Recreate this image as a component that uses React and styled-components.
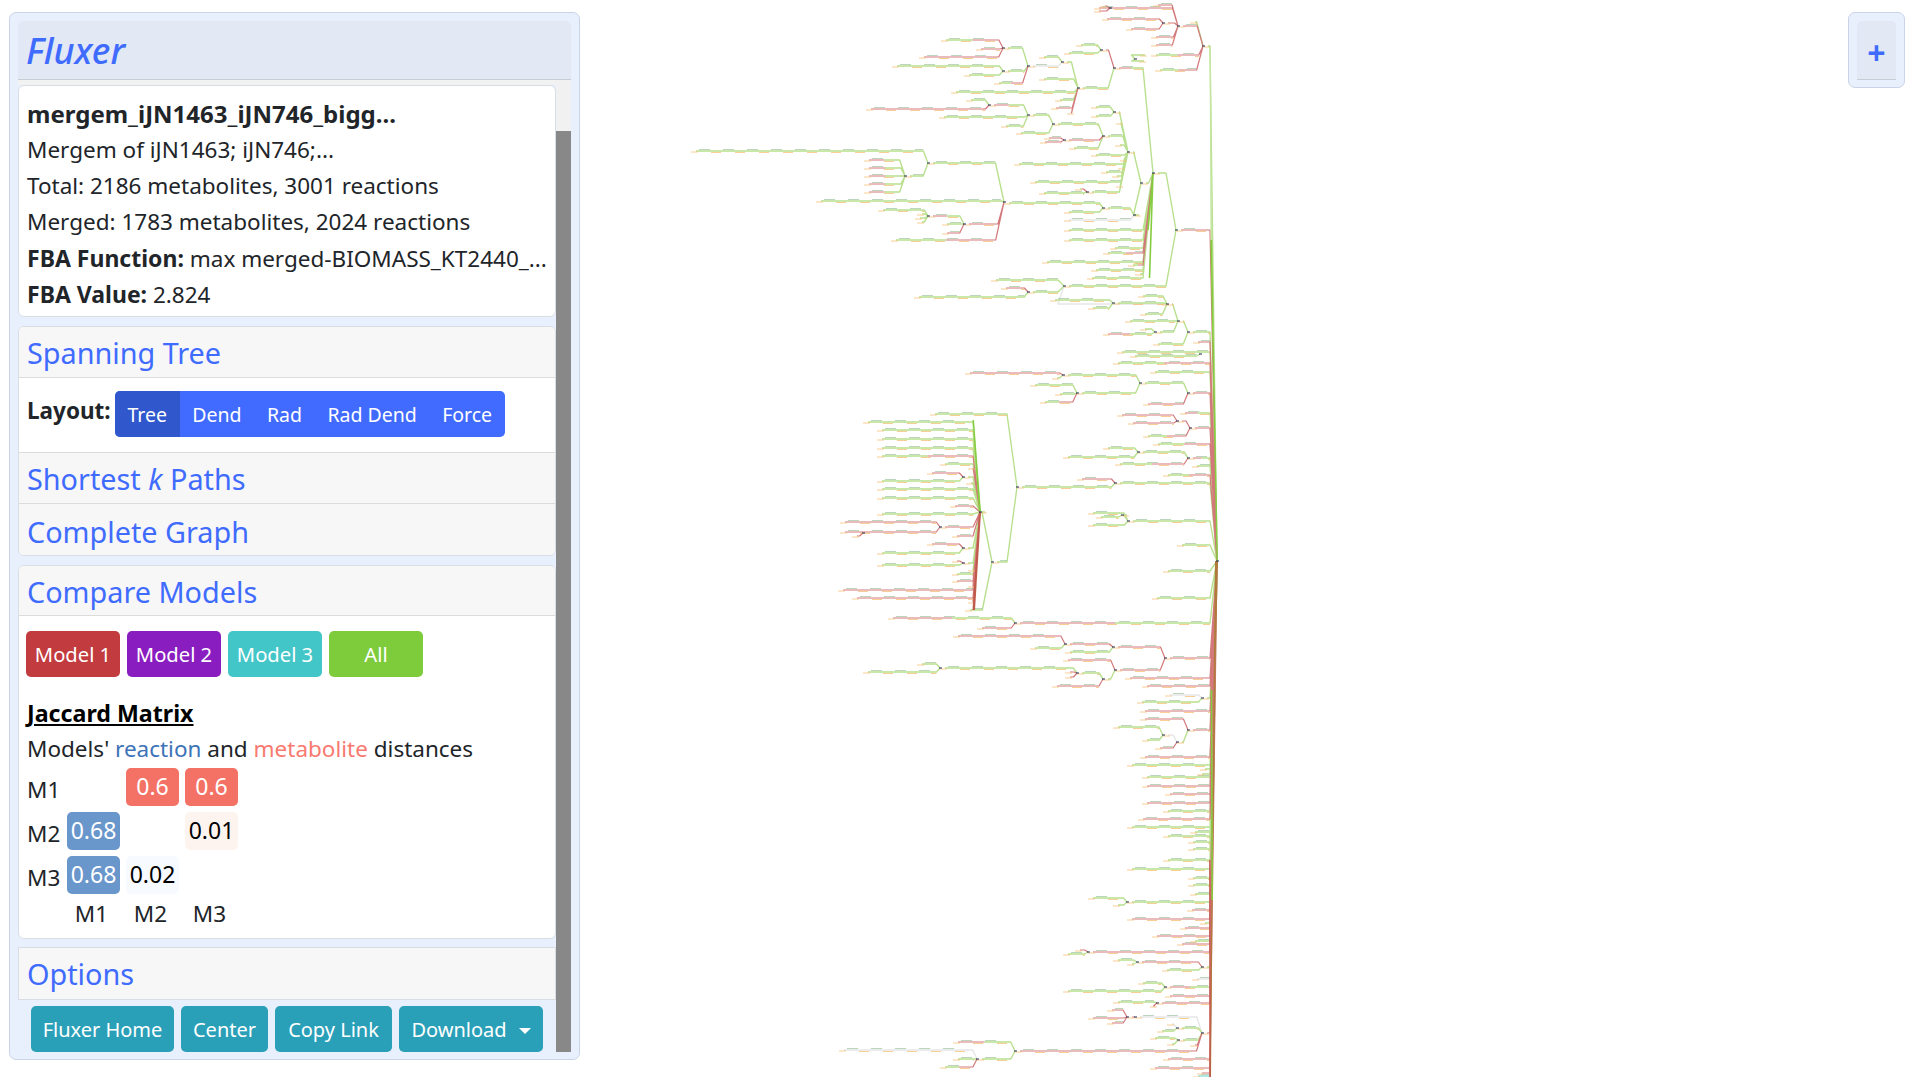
import React, { useLayoutEffect, useRef } from "react";
import styled, { createGlobalStyle } from "styled-components";

const GlobalStyle = createGlobalStyle`
  html, body { margin: 0; padding: 0; background: #fff; overflow: hidden; }
  body { font-family: "Noto Sans", "Open Sans", sans-serif; font-size: 22.5px; color: #212529; }
  b { font-size: 23px; }
`;

// [parentX, parentY, [[x, y, colour]...], elbowX]   g green, r red, w grey, t teal, m red then green, n green then red
const TREE = [
  [1217, 561, [
    [1203, 46], [1176, 230, "r"], [1188, 332], [1193, 342, "r"], [1117, 352], [1113, 363, "n"], [1150, 372],
    [1188, 393, "r"], [1180, 413, "m"], [1190, 428, "r"], [1153, 444, "n"], [1188, 458, "m"], [1192, 466], [1163, 475, "n"],
    [1115, 483], [1128, 521], [1177, 545], [1163, 571], [1152, 598], [1015, 623, "m"], [1165, 658, "r"], [1125, 678, "r"],
    [1142, 686, "r"], [1202, 698], [1140, 711, "r"], [1188, 730, "r"], [1140, 757, "r"], [1127, 765], [1200, 769], [1197, 774],
    [1142, 777], [1142, 786, "r"], [1165, 794, "r"], [1142, 803, "r"], [1163, 811], [1138, 819, "r"], [1127, 827], [1190, 832],
    [1163, 836], [1188, 842], [1188, 849], [1163, 860], [1127, 869], [1188, 878], [1188, 885], [1190, 894], [1127, 902],
    [1187, 910, "r"], [1127, 919, "r"], [1200, 923], [1180, 928, "r"], [1152, 936, "r"], [1190, 941], [1177, 944, "r"],
    [1088, 952, "r"], [1202, 967], [1192, 979, "w"], [1165, 987, "m"], [1165, 996, "r"], [1157, 1003, "r"], [1202, 1033, "r"],
    [1163, 1059, "r"], [1150, 1068, "r"], [1197, 1073, "r"], [1193, 1076, "t"],
  ], 1210],
  [1203, 46, [[1178, 26, "r"], [1151, 55, "n"], [1155, 70, "n"], [1190, 22]]],
  [1178, 26, [[1094, 8, "r"], [1153, 5, "r"], [1163, 23, "r"], [1151, 37, "r"], [1151, 45, "r"]]],
  [1163, 23, [[1102, 19, "r"], [1126, 29, "r"]]],
  [1110, 8, [[1100, 6, "r"], [1094, 11, "r"]]],
  [1135, 59, [[1140, 55], [1139, 61]]],
  [1176, 230, [[1153, 173], [1064, 286]]],
  [1153, 173, [
    [1114, 68, "m"], [1064, 230], [1064, 240], [1103, 253, "n"], [1042, 262], [1091, 270], [1087, 278], [1141, 183],
    [1110, 248], [1135, 274], [1128, 265, "n"],
  ]],
  [1141, 183, [[1128, 152], [1134, 215]]],
  [1128, 152, [
    [1114, 112], [1116, 123], [1103, 136], [1091, 155], [1120, 160], [1014, 164], [1101, 172], [1030, 182], [1087, 192],
    [1115, 145], [1118, 168], [1112, 176], [1116, 186],
  ]],
  [1114, 112, [[1091, 107], [1091, 116]]],
  [1103, 136, [[1053, 124], [1064, 140, "r"], [1069, 148]]],
  [1064, 140, [[1044, 138, "r"], [1040, 142, "r"]]],
  [1053, 124, [[1028, 115], [1016, 133]]],
  [1028, 115, [[989, 105, "m"], [939, 117], [1001, 126]]],
  [989, 105, [[966, 100], [866, 109, "r"]]],
  [1087, 192, [[1039, 193], [1075, 189, "n"]]],
  [1134, 215, [[1103, 208], [1064, 220, "w"]]],
  [1103, 208, [[1004, 203], [1064, 212]]],
  [1004, 202, [[928, 163], [816, 201], [964, 224, "r"], [891, 240, "n"]]],
  [928, 163, [[691, 151], [905, 176]]],
  [905, 176, [[864, 160, "m"], [864, 168, "m"], [864, 176, "m"], [864, 184, "m"], [864, 192, "m"]]],
  [964, 224, [[928, 216, "m"], [942, 224], [942, 233, "r"]]],
  [928, 216, [[878, 210], [917, 214], [915, 218], [917, 222]]],
  [1114, 68, [[1101, 50, "r"], [1078, 88]]],
  [1101, 50, [[1076, 45], [1064, 53]]],
  [1078, 88, [[1062, 62], [1039, 79], [951, 92], [1055, 100], [1051, 108, "r"], [1067, 113, "r"]]],
  [1062, 62, [[1039, 57], [1028, 66, "w"]]],
  [1028, 66, [[1003, 48], [1003, 71], [994, 83, "n"]]],
  [1003, 48, [[941, 40, "n"], [976, 49, "r"], [919, 57, "r"]]],
  [1003, 71, [[892, 66], [964, 75]]],
  [1064, 286, [[991, 280], [1028, 292], [1162, 304, "w"]], 1058],
  [1028, 292, [[1001, 288, "r"], [914, 297]]],
  [1188, 332, [[1178, 321], [1153, 344]]],
  [1178, 321, [[1167, 304], [1125, 321], [1155, 332]]],
  [1167, 304, [[1138, 296], [1113, 303], [1140, 314]]],
  [1113, 303, [[1050, 300], [1088, 308]]],
  [1155, 332, [[1140, 329], [1103, 334, "m"]]],
  [1200, 354, [[1130, 356]]],
  [1188, 393, [[1140, 383], [1143, 404, "r"]]],
  [1140, 383, [[1063, 375], [1077, 393]]],
  [1063, 375, [[965, 373, "r"], [1052, 378]]],
  [1077, 393, [[1030, 385], [1055, 394], [1040, 402, "n"]]],
  [1190, 428, [[1177, 421, "r"], [1143, 436, "n"]]],
  [1177, 421, [[1117, 415, "r"], [1128, 423, "r"]]],
  [1188, 458, [[1138, 452], [1115, 464, "n"]]],
  [1138, 452, [[1103, 448], [1063, 457]]],
  [1115, 483, [[1077, 479, "r"], [1017, 487]]],
  [1017, 487, [[930, 414], [992, 562]]],
  [992, 562, [[980, 512], [965, 610]]],
  [980, 512, [
    [863, 422], [877, 430], [877, 439], [877, 448], [877, 456, "n"], [940, 464], [968, 468, "r"], [963, 477], [966, 483],
    [877, 489], [877, 498], [950, 506, "r"], [877, 514], [940, 527, "r"], [952, 536, "r"], [963, 548], [963, 563],
    [952, 574], [952, 581, "r"], [838, 590, "r"], [852, 598, "r"], [968, 570], [968, 586, "r"], [968, 602, "r"],
  ], 973],
  [963, 477, [[927, 473, "r"], [877, 481]]],
  [963, 548, [[927, 544, "r"], [877, 553]]],
  [963, 563, [[952, 561, "r"], [877, 565]]],
  [940, 527, [[840, 522, "r"], [840, 532, "r"]]],
  [863, 533, [[852, 536, "r"]]],
  [1128, 521, [[1122, 515], [1088, 513], [1088, 525]]],
  [1122, 515, [[1096, 517]]],
  [1015, 623, [[888, 618, "m"], [977, 628, "r"]]],
  [1165, 658, [[1113, 647, "r"], [1115, 670, "r"]]],
  [1113, 647, [[1065, 644, "r"], [1065, 652]]],
  [1065, 644, [[953, 636, "r"], [1030, 648]]],
  [1115, 670, [[1063, 660, "r"], [1103, 679]]],
  [1103, 679, [[1077, 673], [1052, 686, "r"]]],
  [1077, 673, [[940, 668], [1065, 672, "r"], [1065, 677, "r"]]],
  [940, 668, [[917, 664], [863, 672]]],
  [1202, 698, [[1165, 695, "w"], [1137, 702]]],
  [1188, 730, [[1140, 719, "r"], [1177, 742]]],
  [1177, 742, [[1163, 735, "w"], [1155, 748, "r"]]],
  [1163, 735, [[1113, 727], [1142, 740]]],
  [1127, 902, [[1088, 898], [1113, 905]]],
  [1088, 952, [[1075, 950, "r"], [1063, 954]]],
  [1202, 967, [[1137, 962, "r"], [1162, 970]]],
  [1137, 962, [[1113, 960], [1127, 964]]],
  [1165, 987, [[1138, 983], [1063, 991]]],
  [1157, 1003, [[1113, 1002], [1150, 1006, "r"]]],
  [1202, 1033, [[1135, 1017, "w"], [1177, 1028], [1178, 1040], [1015, 1051, "r"], [1190, 1045, "r"]]],
  [1135, 1017, [[1127, 1017, "r"]]],
  [1127, 1017, [[1107, 1010, "r"], [1088, 1018, "r"], [1107, 1023, "r"]]],
  [1177, 1028, [[1167, 1024, "w"], [1157, 1031]]],
  [1178, 1040, [[1150, 1038], [1167, 1044]]],
  [1015, 1051, [[953, 1042, "m"], [977, 1059]]],
  [977, 1059, [[839, 1050, "w"], [953, 1059], [940, 1067, "n"]]],
];

const STROKES = { t: "#8fdcd8", w: "#e6e6e6", g: "#b9e08f", r: "#d4797b" };

function buildTree() {
  const lines = { t: "", w: "", g: "", r: "" };
  let tags = "";
  let tips = "";
  let nodes = "";
  TREE.forEach(([px, py, kids, fixed]) => {
    nodes += `M${px - 1} ${py}h3`;
    kids.forEach(([x0, y, c = "g"]) => {
      const x = x0 + 5;
      const bend = fixed ?? px - Math.min(Math.abs(y - py) * 0.14 + 3, 10);
      const mid = (x + bend) / 2;
      if (c === "t") {
        lines.t += `M${x} ${y}L${bend} ${y}`;
      } else if (c === "m" || c === "n") {
        lines[c === "m" ? "r" : "g"] += `M${x} ${y}L${mid} ${y}`;
        lines[c === "m" ? "g" : "r"] += `M${mid} ${y}L${bend} ${y}L${px} ${py}`;
      } else {
        lines[c] += `M${x} ${y}L${bend} ${y}L${px} ${py}`;
      }
      for (let at = x + 3; at < bend - 6; at += 24) {
        tags += `M${at} ${y - 1.5}h${Math.min(11, bend - at)}`;
        if (at + 12 < bend) tips += `M${at + 12} ${y + 1.5}h${Math.min(10, bend - at - 12)}`;
      }
      tips += `M${x0} ${y + 1}h7`;
    });
  });
  return { lines, tags, tips, nodes };
}

const { lines, tags, tips, nodes } = buildTree();

const FluxTree = () => (
  <Canvas viewBox="0 0 1909 1077">
    <g fill="none" strokeLinejoin="round">
      {Object.keys(lines).map((c) => (
        <path key={c} d={lines[c]} stroke={STROKES[c]} strokeWidth={c === "r" ? 1.2 : 1.4} />
      ))}
      <path d={tags} stroke="#8fb98f" strokeWidth="1" opacity="0.6" />
      <path d={tips} stroke="#f6bd72" strokeWidth="1" opacity="0.75" />
    </g>
    <polygon points="1209.5,46 1210.8,46 1212.2,240 1210.5,240" fill="#c4e6a2" />
    <polygon points="1210.3,240 1212.2,240 1214.5,380 1218,561 1216.5,561" fill="#86cc40" />
    <polygon points="1215,561 1218,561 1215.8,650 1214.5,760 1212.5,900 1211,1077 1209.5,1077" fill="#af7a3b" />
    <path d="M1211.5 690L1212.2 900" stroke="#86cc40" strokeWidth="1.6" />
    <path d="M1209.8 860L1210 1077" stroke="#c4504f" strokeWidth="1.2" />
    <polygon points="972.5,420 974,420 981,512 979,512" fill="#86cc40" />
    <polygon points="979,512 981,512 975,610 972.5,610" fill="#c05a4a" />
    <path d="M1148 230L1153 173L1149.5 278" fill="none" stroke="#86cc40" strokeWidth="1.6" />
    <path d={nodes} stroke="#1d2a55" strokeWidth="1.2" fill="none" />
  </Canvas>
);

const Page = styled.div`
  position: relative;
  width: 1909px;
  height: 1077px;
  overflow: hidden;
`;

const Canvas = styled.svg`
  display: block;
  width: 1909px;
  height: 1077px;
`;

const Panel = styled.aside`
  position: absolute;
  left: 9px;
  top: 12px;
  width: 571px;
  height: 1048px;
  box-sizing: border-box;
  padding: 8px 8px 7px;
  background: #e9f0fd;
  border: 1px solid #c9d4e8;
  border-radius: 7px;
  display: flex;
  flex-direction: column;
`;

const TitleBar = styled.header`
  flex: none;
  height: 59px;
  box-sizing: border-box;
  padding: 0 8px;
  background: #e2e8f4;
  border-bottom: 1px solid #c8ccd3;
  border-radius: 5px 5px 0 0;
  display: flex;
  align-items: center;
`;

const Title = styled.h1`
  margin: 0;
  font-size: 36px;
  font-weight: 500;
  font-style: italic;
  color: #3f6bff;
`;

const ScrollArea = styled.div`
  flex: 1;
  min-height: 0;
  display: flex;
`;

const Scroller = styled.div`
  flex: 1;
  min-width: 0;
  overflow: hidden;
`;

const ScrollRail = styled.div`
  flex: none;
  width: 15px;
  box-sizing: border-box;
  padding-top: 51px;
  background: #f1f1f1;
  display: flex;
`;

const ScrollThumb = styled.div`
  flex: 1;
  background: #888;
`;

const TopStrip = styled.div`
  height: 59px;
  background: #f2f2f2;
`;

const Card = styled.section`
  background: #fff;
  border: 1px solid #d9dde4;
  border-radius: ${(p) => (p.$flat ? "0" : "6px")};
  margin-bottom: ${(p) => p.$gap ?? 9}px;
  overflow: hidden;
`;

const InfoBody = styled.div`
  padding: 10px 8px 4px;
`;

const Line = styled.div`
  height: 36px;
  line-height: 36px;
  white-space: nowrap;
`;

const ModelName = styled(Line)`
  font-size: 24px;
  font-weight: 700;
`;

const CardHead = styled.h2`
  margin: 0;
  height: ${(p) => p.$h ?? 51}px;
  box-sizing: border-box;
  padding: ${(p) => p.$drop ?? 0}px 8px 0;
  background: #f7f7f7;
  border-bottom: 1px solid #dcdcdc;
  font-size: 28.8px;
  font-weight: 400;
  color: #3f6bff;
  display: flex;
  align-items: center;
  white-space: pre;
  &:last-child { border-bottom: 0; }
`;

const LayoutRow = styled.div`
  height: 75px;
  box-sizing: border-box;
  padding: 13px 8px 0;
  border-bottom: 1px solid #dcdcdc;
  display: flex;
  gap: 4px;
  font-weight: 700;
  font-size: 22.5px;
`;

const LayoutLabel = styled.span`
  line-height: 40px;
`;

const SegGroup = styled.div`
  display: flex;
  height: 46px;
  background: #416bff;
  border-radius: 5px;
  overflow: hidden;
`;

const Seg = styled.button`
  border: 0;
  padding: 0 12.7px;
  background: ${(p) => (p.$active ? "#3058cc" : "transparent")};
  color: #fff;
  font: 400 19.5px "Noto Sans", sans-serif;
`;

const CompareBody = styled.div`
  padding: 15px 8px 0;
  height: 322px;
  box-sizing: border-box;
  overflow: hidden;
`;

const ModelRow = styled.div`
  display: flex;
  gap: 7px;
  margin-left: -1px;
  margin-bottom: 18px;
`;

const ModelBtn = styled.button`
  width: 94px;
  height: 46px;
  padding: 0;
  border: 0;
  border-radius: 5px;
  background: ${(p) => p.$bg};
  color: #fff;
  font: 400 20.2px "Noto Sans", sans-serif;
`;

const MatrixTitle = styled.div`
  height: 36px;
  line-height: 36px;
  font-size: 23.2px;
  font-weight: 700;
  color: #000;
  text-decoration: underline;
`;

const Tint = styled.span`
  color: ${(p) => p.$c};
`;

const Matrix = styled.div`
  display: grid;
  grid-template-columns: 34px repeat(3, 53px);
  grid-auto-rows: 38px;
  column-gap: 6px;
  row-gap: 6px;
  margin-top: 1px;
`;

const RowName = styled.div`
  line-height: 44px;
`;

const Cell = styled.div`
  border-radius: 5px;
  background: ${(p) => p.$bg ?? "transparent"};
  color: ${(p) => p.$fg ?? "#000"};
  font-size: 23px;
  line-height: 36px;
  text-align: center;
`;

const AxisName = styled.div`
  text-align: center;
  line-height: 28px;
  margin-left: -4px;
`;

const OptionsRow = styled.div`
  display: flex;
  gap: 7px;
  padding: 6px 0 0 13px;
`;

const TealBtn = styled.button`
  height: 46px;
  width: ${(p) => p.$w}px;
  padding: 0;
  border: 0;
  border-radius: 5px;
  background: #2aa0b8;
  color: #fff;
  font: 400 20px "Noto Sans", sans-serif;
  ${(p) =>
    p.$caret &&
    `&::after {
      content: "";
      display: inline-block;
      margin-left: 12px;
      vertical-align: 3px;
      border-top: 6px solid #fff;
      border-left: 6px solid transparent;
      border-right: 6px solid transparent;
    }`}
`;

const ZoomPanel = styled.div`
  position: absolute;
  left: 1848px;
  top: 12px;
  width: 57px;
  height: 76px;
  box-sizing: border-box;
  padding: 8px;
  background: #e9f0fd;
  border: 1px solid #c9d4e8;
  border-radius: 7px;
`;

const ZoomInner = styled.div`
  height: 58px;
  background: #e2e8f4;
  border-bottom: 1px solid #c8ccd3;
  border-radius: 5px 5px 0 0;
  color: #3f6bff;
  font-size: 32px;
  font-weight: 700;
  line-height: 64px;
  text-align: center;
`;

export default function App() {
  const scroller = useRef(null);

  useLayoutEffect(() => {
    scroller.current.scrollTop = 54;
  }, []);

  return (
    <Page>
      <GlobalStyle />
      <FluxTree />
      <Panel>
        <TitleBar>
          <Title>Fluxer</Title>
        </TitleBar>
        <ScrollArea>
          <Scroller ref={scroller}>
            <TopStrip />
            <Card>
              <InfoBody>
                <ModelName>mergem_iJN1463_iJN746_bigg...</ModelName>
                <Line>Mergem of iJN1463; iJN746;...</Line>
                <Line>Total: 2186 metabolites, 3001 reactions</Line>
                <Line>Merged: 1783 metabolites, 2024 reactions</Line>
                <Line><b>FBA Function:</b> max merged-BIOMASS_KT2440_...</Line>
                <Line><b>FBA Value:</b> 2.824</Line>
              </InfoBody>
            </Card>
            <Card>
              <CardHead>Spanning Tree</CardHead>
              <LayoutRow>
                <LayoutLabel>Layout:</LayoutLabel>
                <SegGroup>
                  <Seg $active>Tree</Seg>
                  <Seg>Dend</Seg>
                  <Seg>Rad</Seg>
                  <Seg>Rad Dend</Seg>
                  <Seg>Force</Seg>
                </SegGroup>
              </LayoutRow>
              <CardHead $drop={1}>Shortest <em>k</em> Paths</CardHead>
              <CardHead $drop={3}>Complete Graph</CardHead>
            </Card>
            <Card $gap={8}>
              <CardHead $h={50} $drop={1}>Compare Models</CardHead>
              <CompareBody>
                <ModelRow>
                  <ModelBtn $bg="#c23b3e">Model 1</ModelBtn>
                  <ModelBtn $bg="#8a1dc0">Model 2</ModelBtn>
                  <ModelBtn $bg="#43c6c8">Model 3</ModelBtn>
                  <ModelBtn $bg="#7ecb3c">All</ModelBtn>
                </ModelRow>
                <MatrixTitle>Jaccard Matrix</MatrixTitle>
                <Line>Models' <Tint $c="#3d73b8">reaction</Tint> and <Tint $c="#f87a70">metabolite</Tint> distances</Line>
                <Matrix>
                  <RowName>M1</RowName>
                  <Cell />
                  <Cell $bg="#f47265" $fg="#fff">0.6</Cell>
                  <Cell $bg="#f47265" $fg="#fff">0.6</Cell>
                  <RowName>M2</RowName>
                  <Cell $bg="#6996cb" $fg="#fff">0.68</Cell>
                  <Cell />
                  <Cell $bg="#fef4ef">0.01</Cell>
                  <RowName>M3</RowName>
                  <Cell $bg="#6996cb" $fg="#fff">0.68</Cell>
                  <Cell $bg="#f7fafe">0.02</Cell>
                  <Cell />
                  <div />
                  <AxisName>M1</AxisName>
                  <AxisName>M2</AxisName>
                  <AxisName>M3</AxisName>
                </Matrix>
              </CompareBody>
            </Card>
            <Card $flat $gap={0}>
              <CardHead>Options</CardHead>
            </Card>
            <OptionsRow>
              <TealBtn $w={143}>Fluxer Home</TealBtn>
              <TealBtn $w={87}>Center</TealBtn>
              <TealBtn $w={117}>Copy Link</TealBtn>
              <TealBtn $w={144} $caret>Download</TealBtn>
            </OptionsRow>
          </Scroller>
          <ScrollRail>
            <ScrollThumb />
          </ScrollRail>
        </ScrollArea>
      </Panel>
      <ZoomPanel>
        <ZoomInner>+</ZoomInner>
      </ZoomPanel>
    </Page>
  );
}
